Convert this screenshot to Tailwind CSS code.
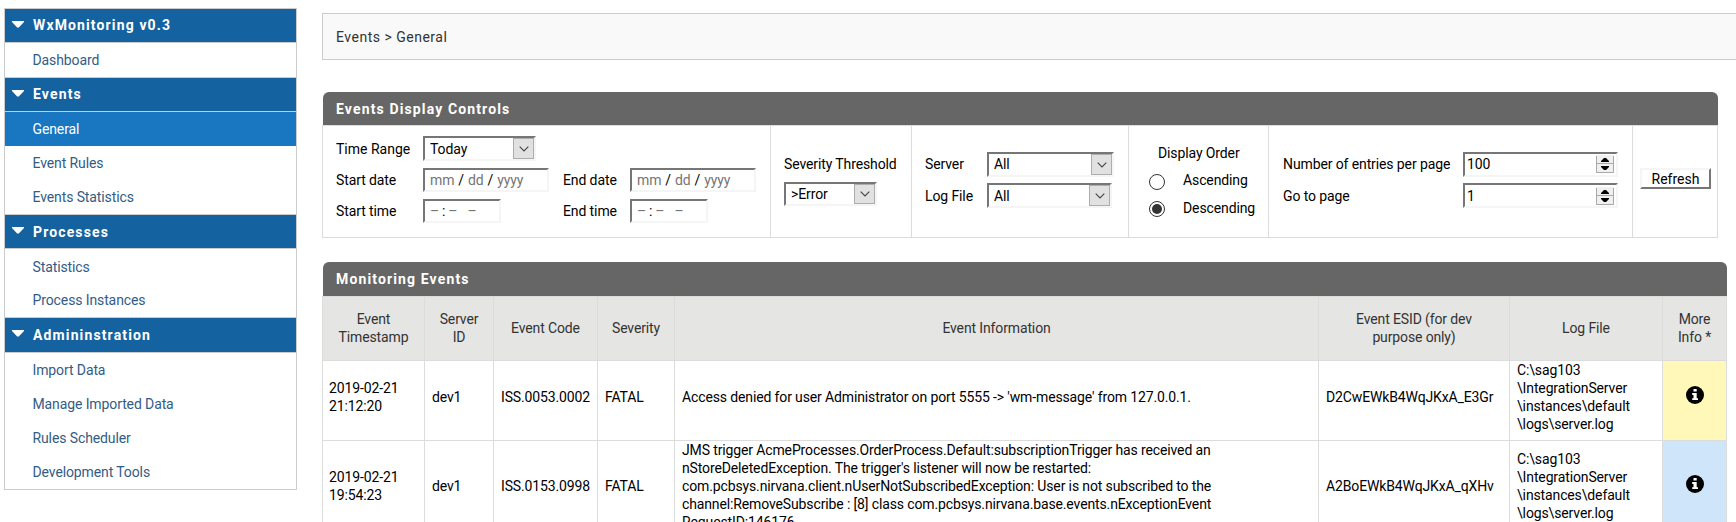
<!DOCTYPE html>
<html lang="en">
<head>
<meta charset="utf-8">
<title>WxMonitoring</title>
<script src="https://cdn.jsdelivr.net/npm/@tailwindcss/browser@4"></script>
</head>
<body class="bg-white font-[Roboto,sans-serif] text-sm leading-[18px] tracking-[-0.11px] text-black overflow-hidden h-[522px] w-[1736px]">
<svg class="hidden">
  <symbol id="tri" viewBox="0 0 12 7"><path d="M0 0h12v1L6.8 6.6H5.2L0 1z" fill="#fff"/></symbol>
  <symbol id="chev" viewBox="0 0 10 6"><path d="M.7.7L5 5 9.300.7" fill="none" stroke="#444" stroke-width="1.1"/></symbol>
  <symbol id="info" viewBox="0 0 18 18"><circle cx="9" cy="9" r="9" fill="#000"/><path d="M7.500 3h3.200v2.600H7.500zM6.200 7h4.500v5.200H12v1.900H6.200v-1.900h1.300V8.900H6.200z" fill="#fff"/></symbol>
  <symbol id="spin" viewBox="0 0 18 18"><path d="M0 0h18v18H0z" fill="#f0f0f0"/><path d="M.5 1v16.500h17V1M0 8.500h18" fill="none" stroke="#a8a8a8"/><path d="M5 7h8v-1L10 3H8L5 6zM5 11h8v1l-3 3H8l-3-3z" fill="#000"/></symbol>
</svg>
<div class="flex items-start">
  <nav class="ml-1 mt-2 w-[293px] shrink-0 border border-[#ccc] text-[#335c85]">
    <div class="flex h-[34px] items-center border-b border-[#ccc] bg-[#1562a0] pb-px font-bold tracking-[1.13px] text-white"><svg class="ml-[7px] mr-[9px] -mt-[2px] h-[7px] w-3"><use href="#tri"/></svg>WxMonitoring v0.3</div>
    <div class="flex h-[34px] items-center pl-[27.5px]">Dashboard</div>
    <div class="flex h-[35px] items-center border-y border-[#ccc] bg-[#1562a0] pb-px font-bold tracking-[1.13px] text-white"><svg class="ml-[7px] mr-[9px] -mt-[2px] h-[7px] w-3"><use href="#tri"/></svg>Events</div>
    <div class="flex h-[34px] items-center bg-[#1976c1] pl-[27.5px] text-white">General</div>
    <div class="flex h-[34px] items-center pl-[27.5px]">Event Rules</div>
    <div class="flex h-[34px] items-center pl-[27.5px]">Events Statistics</div>
    <div class="flex h-[35px] items-center border-y border-[#ccc] bg-[#1562a0] font-bold tracking-[1.13px] text-white"><svg class="ml-[7px] mr-[9px] -mt-[3px] h-[7px] w-3"><use href="#tri"/></svg>Processes</div>
    <div class="flex h-[34px] items-center pl-[27.5px] pt-0.5">Statistics</div>
    <div class="flex h-[34px] items-center pl-[27.5px]">Process Instances</div>
    <div class="flex h-[36px] items-center border-y border-[#ccc] bg-[#1562a0] font-bold tracking-[1.13px] text-white"><svg class="ml-[7px] mr-[9px] -mt-[3px] h-[7px] w-3"><use href="#tri"/></svg>Admininstration</div>
    <div class="flex h-[34px] items-center pl-[27.5px]">Import Data</div>
    <div class="flex h-[34px] items-center pl-[27.5px]">Manage Imported Data</div>
    <div class="flex h-[34px] items-center pl-[27.5px]">Rules Scheduler</div>
    <div class="flex h-[34px] items-center pl-[27.5px]">Development Tools</div>
  </nav>

  <main class="ml-[25px] flex-1 pt-[13px]">
    <div class="flex h-[47px] items-center border border-r-0 border-[#ccc] bg-[#f9f9f9] pl-[13px] tracking-[0.5px] text-[#333]">Events &gt; General</div>

    <section class="mt-8 w-[1396px]">
      <h2 class="ml-px flex h-[33px] items-center rounded-t-[6px] bg-[#666] pl-[13px] font-bold tracking-[1.13px] text-white">Events Display Controls</h2>
      <div class="grid h-[113px] grid-cols-[448px_141px_217px_140px_364px_86px] border border-[#dcdcdc]">
        <div class="grid auto-rows-[31px] grid-cols-[87px_140px_67px_126px] content-start items-center border-r border-[#dcdcdc] pl-[13px] pt-[7px]">
          <span class="tracking-normal">Time Range</span>
          <div class="col-span-3 flex h-[25px] w-[113px] items-center justify-between border-2 border-[#f5f5f5] border-l-[#767676] border-t-[#767676] pl-[5px]">Today<span class="flex h-[21px] w-[21px] items-center justify-center border border-[#adadad] bg-[#e1e1e1]"><svg class="h-1.5 w-2.5"><use href="#chev"/></svg></span></div>
          <span>Start date</span>
          <div class="flex h-6 w-[126px] items-center gap-1 border-2 border-[#f5f5f5] border-l-[#767676] border-t-[#767676] pl-[5px] text-[#757575]">mm<b class="font-normal text-black">/</b>dd<b class="font-normal text-black">/</b>yyyy</div>
          <span>End date</span>
          <div class="flex h-6 w-[126px] items-center gap-1 border-2 border-[#f5f5f5] border-l-[#767676] border-t-[#767676] pl-[5px] text-[#757575]">mm<b class="font-normal text-black">/</b>dd<b class="font-normal text-black">/</b>yyyy</div>
          <span>Start time</span>
          <div class="flex h-6 w-[78px] items-center border-2 border-[#f5f5f5] border-l-[#767676] border-t-[#767676] pl-[5px] text-[#757575]">–<b class="mx-[3px] font-normal text-black">:</b>–<span class="ml-[10px]">–</span></div>
          <span>End time</span>
          <div class="flex h-6 w-[78px] items-center border-2 border-[#f5f5f5] border-l-[#767676] border-t-[#767676] pl-[5px] text-[#757575]">–<b class="mx-[3px] font-normal text-black">:</b>–<span class="ml-[10px]">–</span></div>
        </div>
        <div class="border-r border-[#dcdcdc] pl-[13px] pt-[29px]">
          <div class="mb-[9px]">Severity Threshold</div>
          <div class="flex h-6 w-[93px] items-center justify-between border-2 border-[#f5f5f5] border-l-[#767676] border-t-[#767676] pl-[5px]">&gt;Error<span class="flex h-5 w-[21px] items-center justify-center border border-[#adadad] bg-[#e1e1e1]"><svg class="h-1.5 w-2.5"><use href="#chev"/></svg></span></div>
        </div>
        <div class="grid auto-rows-[25px] grid-cols-[62px_127px] content-start items-center gap-y-1.5 border-r border-[#dcdcdc] pl-[13px] pt-[26px]">
          <span class="-mt-px">Server</span>
          <div class="flex h-[25px] w-[127px] items-center justify-between border-2 border-[#f5f5f5] border-l-[#767676] border-t-[#767676] pl-[5px]"><span class="-mt-px">All</span><span class="flex h-[21px] w-[21px] items-center justify-center border border-[#adadad] bg-[#e1e1e1]"><svg class="h-1.5 w-2.5"><use href="#chev"/></svg></span></div>
          <span>Log File</span>
          <div class="flex h-[25px] w-[125px] items-center justify-between border-2 border-[#f5f5f5] border-l-[#767676] border-t-[#767676] pl-[5px]">All<span class="flex h-[21px] w-[21px] items-center justify-center border border-[#adadad] bg-[#e1e1e1]"><svg class="h-1.5 w-2.5"><use href="#chev"/></svg></span></div>
        </div>
        <div class="border-r border-[#dcdcdc] pl-5 pt-[18px]">
          <div class="mb-[9px] pl-[9px]">Display Order</div>
          <div class="flex h-[27px] items-start"><i class="mt-[3px] mr-[18px] h-4 w-4 rounded-full border border-[#333]"></i>Ascending</div>
          <div class="flex items-start"><i class="mt-[3px] mr-[18px] flex h-4 w-4 items-center justify-center rounded-full border border-[#333]"><i class="h-2.5 w-2.5 rounded-full bg-[#333]"></i></i><span class="mt-px">Descending</span></div>
        </div>
        <div class="grid auto-rows-[25px] grid-cols-[180px_155px] content-start items-center gap-y-1.5 border-r border-[#dcdcdc] pl-[14px] pt-[26px]">
          <span class="-mt-px">Number of entries per page</span>
          <div class="flex h-[25px] items-center justify-between border-2 border-[#f5f5f5] border-l-[#767676] border-t-[#767676] pl-0.5 pr-0.5"><span class="-mt-px">100</span><svg class="-mt-px h-[18px] w-[18px]"><use href="#spin"/></svg></div>
          <span>Go to page</span>
          <div class="flex h-[25px] items-center justify-between border-2 border-[#f5f5f5] border-l-[#767676] border-t-[#767676] pl-0.5 pr-0.5">1<svg class="h-[18px] w-[18px]"><use href="#spin"/></svg></div>
        </div>
        <div class="pl-[7px] pt-[42px]">
          <div class="flex h-[21px] w-[71px] items-center justify-center border-2 border-[#767676] border-l-[#f5f5f5] border-t-[#f5f5f5] tracking-normal">Refresh</div>
        </div>
      </div>
    </section>

    <section class="mt-6 w-[1405px]">
      <h2 class="ml-px flex h-[34px] items-center rounded-t-[6px] bg-[#666] pl-[13px] font-bold tracking-[1.13px] text-white">Monitoring Events</h2>
      <div class="border-l border-t border-[#dcdcdc] tracking-[-0.13px]">
        <div class="grid h-16 grid-cols-[102px_69px_104px_77px_644px_191px_153px_64px] bg-[#e5e5e3] text-center text-[#333] *:flex *:items-center *:justify-center *:border-b *:border-r *:border-[#dcdcdc] *:pb-0.5">
          <div>Event<br>Timestamp</div><div>Server<br>ID</div><div>Event Code</div><div>Severity</div><div>Event Information</div><div>Event ESID (for dev<br>purpose only)</div><div>Log File</div><div>More<br>Info *</div>
        </div>
        <div class="grid h-20 grid-cols-[102px_69px_104px_77px_644px_191px_153px_64px] *:flex *:items-center *:border-b *:border-r *:border-[#dcdcdc] *:pb-[7px] *:pl-[7px]">
          <div><span class="-ml-px">2019-02-21<br>21:12:20</span></div><div>dev1</div><div>ISS.0053.0002</div><div>FATAL</div><div>Access denied for user Administrator on port 5555 -&gt; 'wm-message' from 127.0.0.1.</div><div>D2CwEWkB4WqJKxA_E3Gr</div><div>C:\sag103<br>\IntegrationServer<br>\instances\default<br>\logs\server.log</div><div class="bg-[#fff8b8]"><svg class="ml-4 -mt-1 h-[18px] w-[18px]"><use href="#info"/></svg></div>
        </div>
        <div class="grid h-[92px] grid-cols-[102px_69px_104px_77px_644px_191px_153px_64px] *:flex *:items-center *:border-b *:border-r *:border-[#dcdcdc] *:pb-px *:pl-[7px]">
          <div><span class="-ml-px -mt-px">2019-02-21<br>19:54:23</span></div><div>dev1</div><div>ISS.0153.0998</div><div>FATAL</div><div>JMS trigger AcmeProcesses.OrderProcess.Default:subscriptionTrigger has received an<br>nStoreDeletedException. The trigger's listener will now be restarted:<br>com.pcbsys.nirvana.client.nUserNotSubscribedException: User is not subscribed to the<br>channel:RemoveSubscribe : [8] class com.pcbsys.nirvana.base.events.nExceptionEvent<br>RequestID:146176</div><div>A2BoEWkB4WqJKxA_qXHv</div><div>C:\sag103<br>\IntegrationServer<br>\instances\default<br>\logs\server.log</div><div class="bg-[#cfe5f9]"><svg class="ml-4 -mt-1 h-[18px] w-[18px]"><use href="#info"/></svg></div>
        </div>
      </div>
    </section>
  </main>
</div>
</body>
</html>
